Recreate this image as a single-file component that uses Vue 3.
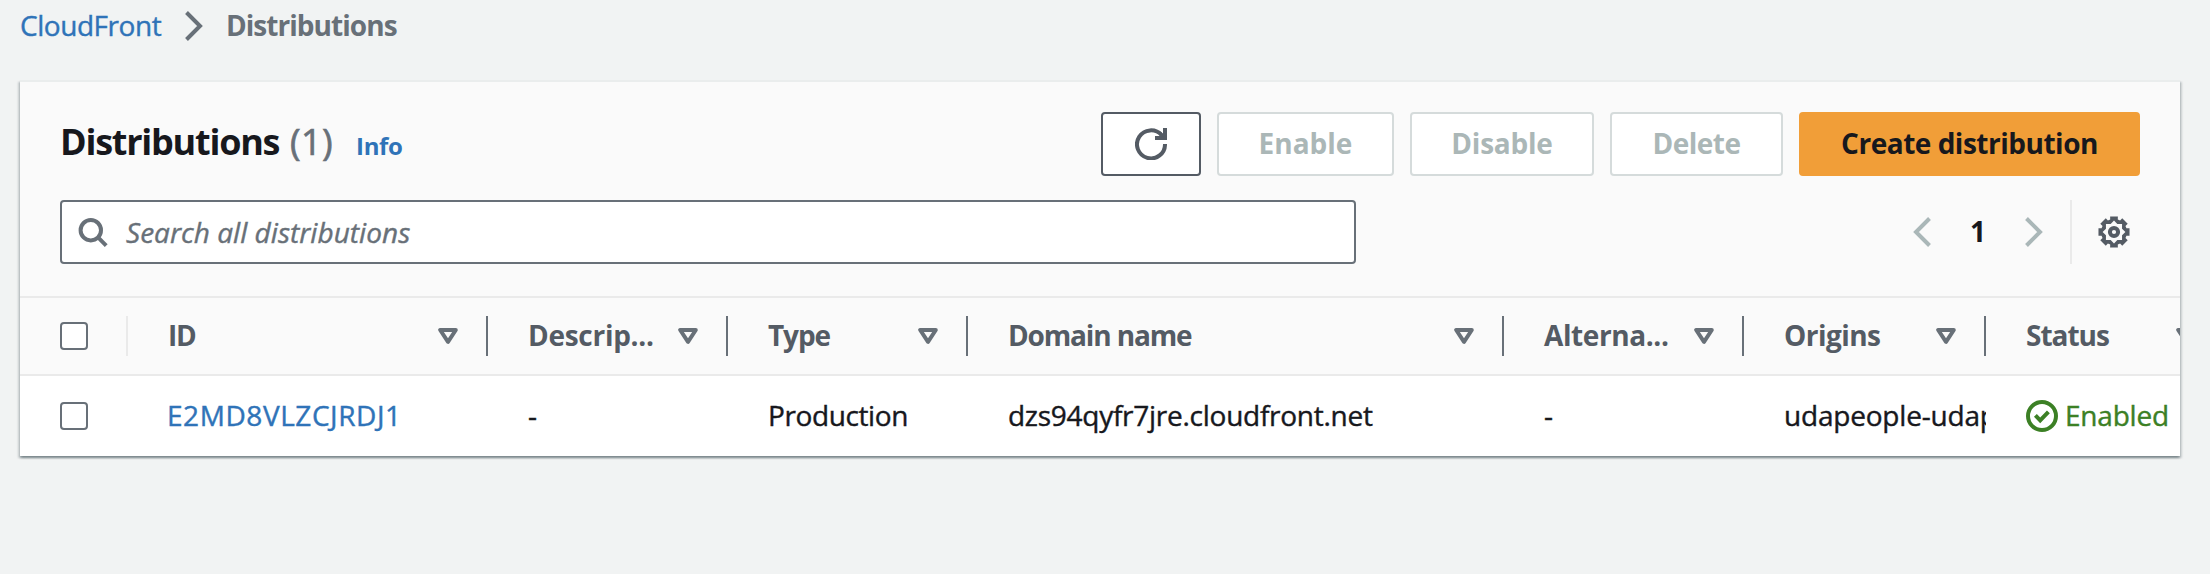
<script setup>
const columns = [
  { key: 'id', label: 'ID', cls: 'w-id' },
  { key: 'description', label: 'Descrip...', cls: 'w-description' },
  { key: 'type', label: 'Type', cls: 'w-type' },
  { key: 'domain', label: 'Domain name', cls: 'w-domain' },
  { key: 'alternate', label: 'Alterna...', cls: 'w-alternate' },
  { key: 'origins', label: 'Origins', cls: 'w-origins' },
  { key: 'status', label: 'Status', cls: 'w-status' }
]

const rows = [
  {
    id: 'E2MD8VLZCJRDJ1',
    description: '-',
    type: 'Production',
    domain: 'dzs94qyfr7jre.cloudfront.net',
    alternate: '-',
    origins: 'udapeople-udap',
    status: 'Enabled'
  }
]

const polar = (deg, r) => {
  const a = (deg * Math.PI) / 180
  return `${(16 + r * Math.sin(a)).toFixed(2)} ${(16 - r * Math.cos(a)).toFixed(2)}`
}

// Eight-toothed rim with a star-shaped opening
const outer = []
const inner = []
for (let k = 0; k < 8; k++) {
  const a = k * 45
  outer.push(polar(a - 17, 13), polar(a - 14, 16), polar(a + 14, 16), polar(a + 17, 13))
  inner.push(polar(a, 11.4), polar(a + 22.5, 8.7))
}
const gearPath = `M${outer.join('L')}ZM${inner.join('L')}Z`
</script>

<template>
  <div class="page">
    <nav class="crumbs">
      <a class="crumb-link">CloudFront</a>
      <svg class="crumb-sep" width="20" height="32" viewBox="0 0 20 32"><path d="M2.5 2.5 16 16 2.5 29.5" /></svg>
      <span class="crumb-current">Distributions</span>
    </nav>

    <section class="card">
      <header class="head">
        <div class="title-row">
          <h1 class="title">Distributions</h1>
          <span class="count">(1)</span>
          <a class="info">Info</a>
          <div class="actions">
            <button class="btn refresh">
              <svg width="32" height="32" viewBox="0 0 32 32">
                <path class="line" d="M30 16A14 14 0 1 1 26.6 7.2" />
                <path class="fill" d="M28 0h4v12H20V8h5.5L24 6l2.5-2L28 6z" />
              </svg>
            </button>
            <button class="btn off enable">Enable</button>
            <button class="btn off disable">Disable</button>
            <button class="btn off delete">Delete</button>
            <button class="btn primary">Create distribution</button>
          </div>
        </div>

        <div class="filter-row">
          <div class="search">
            <svg width="32" height="32" viewBox="0 0 32 32">
              <circle cx="13.8" cy="14.2" r="10.2" /><path d="M20.8 21.2 29.2 29.6" />
            </svg>
            <span class="placeholder">Search all distributions</span>
          </div>
          <div class="pager">
            <svg class="chev" width="20" height="32" viewBox="0 0 20 32"><path d="M17.5 2.5 4 16 17.5 29.5" /></svg>
            <span class="page-no">1</span>
            <svg class="chev" width="20" height="32" viewBox="0 0 20 32"><path d="M2.5 2.5 16 16 2.5 29.5" /></svg>
          </div>
          <div class="settings">
            <svg width="32" height="32" viewBox="0 0 32 32">
              <path class="rim" :d="gearPath" /><circle class="hub" cx="16" cy="16" r="4.1" />
            </svg>
          </div>
        </div>
      </header>

      <div class="grid thead">
        <div class="select"><span class="box"></span></div>
        <div v-for="col in columns" :key="col.key" class="th">
          <span class="label" :class="col.cls">{{ col.label }}</span>
          <svg class="sort" width="20" height="16" viewBox="0 0 20 16"><path d="M2.2 2h15.6L10 13.8z" /></svg>
        </div>
      </div>

      <div v-for="row in rows" :key="row.id" class="grid tbody">
        <div class="select"><span class="box"></span></div>
        <div class="td link">{{ row.id }}</div>
        <div class="td">{{ row.description }}</div>
        <div class="td type">{{ row.type }}</div>
        <div class="td domain">{{ row.domain }}</div>
        <div class="td">{{ row.alternate }}</div>
        <div class="td origins">{{ row.origins }}</div>
        <div class="td status">
          <svg width="32" height="32" viewBox="0 0 32 32">
            <circle cx="16" cy="16" r="14" /><path d="M9.4 15.4 14.2 20.4 22.4 11.8" />
          </svg>
          <span>{{ row.status }}</span>
        </div>
      </div>
    </section>
  </div>
</template>

<style>
body {
  background: #f1f3f3;
}
</style>

<style scoped>
.page {
  box-sizing: border-box;
  height: 574px;
  padding: 0 30px 0 20px;
  overflow: hidden;
  background: #f1f3f3;
  color: #17181d;
  font: 28px/40px "Open Sans", "Noto Sans", sans-serif;
  white-space: nowrap;
}
svg {
  display: block;
  flex: none;
  fill: none;
  stroke-width: 4;
}
.crumb-link,
.placeholder,
.count,
.td {
  -webkit-text-stroke: 0.4px currentColor;
}
.crumbs {
  display: flex;
  align-items: flex-start;
  height: 75px;
  padding-top: 5px;
}
.crumb-link {
  width: 164px;
  letter-spacing: -0.45px;
  color: #2f73b8;
}
.crumb-sep {
  margin-top: 5px;
  stroke: #687078;
}
.crumb-current {
  margin-left: 22px;
  font-weight: 700;
  letter-spacing: -0.96px;
  color: #687078;
}
.card {
  position: relative;
  width: 2160px;
  border-top: 2px solid #eaeded;
  background: #fff;
  box-shadow: 0 2px 2px rgba(0, 28, 36, 0.3), 2px 2px 2px rgba(0, 28, 36, 0.15), -2px 2px 2px rgba(0, 28, 36, 0.15);
}
.head {
  box-sizing: border-box;
  height: 216px;
  padding: 30px 40px 0;
  border-bottom: 2px solid #eaeaea;
  background: #fafafa;
}
.title-row {
  display: flex;
  align-items: baseline;
  height: 64px;
}
.title {
  width: 230px;
  margin: 0;
  font-size: 36px;
  line-height: 60px;
  letter-spacing: -1.24px;
}
.count {
  width: 66px;
  font-size: 36px;
  letter-spacing: 0.4px;
  color: #687078;
  -webkit-text-stroke-width: 0.7px;
}
.info {
  font-size: 24px;
  font-weight: 700;
  letter-spacing: -0.3px;
  color: #2f73b8;
}
.actions {
  display: flex;
  align-self: flex-start;
  gap: 16px;
  margin-left: auto;
}
.btn {
  display: flex;
  align-items: center;
  justify-content: center;
  box-sizing: border-box;
  height: 64px;
  padding: 0 0 2px;
  border: 2px solid #545b64;
  border-radius: 4px;
  background: #fff;
  color: #17181d;
  font: 700 28px/40px "Open Sans", "Noto Sans", sans-serif;
}
.refresh {
  width: 100px;
  padding: 0;
}
.line {
  stroke: #545b64;
}
.fill {
  fill: #545b64;
}
.off {
  border-color: #d5dbdb;
  color: #abb7b7;
}
.enable {
  width: 177px;
}
.disable {
  width: 184px;
  letter-spacing: -0.23px;
}
.delete {
  width: 173px;
  letter-spacing: -0.5px;
}
.primary {
  width: 341px;
  border-color: #f19e38;
  background: #f19e38;
  letter-spacing: -0.49px;
}
.filter-row {
  display: flex;
  align-items: center;
  height: 64px;
  margin-top: 24px;
}
.search {
  display: flex;
  align-items: center;
  box-sizing: border-box;
  width: 1296px;
  height: 64px;
  padding-left: 15px;
  border: 2px solid #687078;
  border-radius: 4px;
  background: #fff;
}
.search svg {
  stroke: #687078;
}
.placeholder {
  margin-left: 17px;
  font-style: italic;
  letter-spacing: 0.03px;
  color: #687078;
}
.pager {
  display: flex;
  align-items: center;
  margin-left: auto;
}
.chev {
  stroke: #aab7b8;
}
.page-no {
  width: 92px;
  padding-bottom: 2px;
  text-align: center;
  font-weight: 700;
}
.settings {
  display: flex;
  align-items: center;
  box-sizing: border-box;
  width: 70px;
  height: 64px;
  margin-left: 26px;
  padding-left: 26px;
  border-left: 2px solid #eaeaea;
}
.rim {
  fill: #545b64;
  fill-rule: evenodd;
}
.hub {
  stroke: #545b64;
}
.grid {
  display: grid;
  grid-template-columns: 108px 360px 240px 240px 536px 240px 242px 240px;
  overflow: hidden;
}
.thead {
  height: 76px;
  border-bottom: 2px solid #eaeaea;
  background: #fafafa;
}
.tbody {
  height: 80px;
}
.select {
  display: flex;
  align-items: center;
  padding-left: 40px;
}
.thead .select {
  height: 40px;
  margin-top: 18px;
  border-right: 2px solid #eaeaea;
}
.box {
  box-sizing: border-box;
  width: 28px;
  height: 28px;
  border: 2px solid #687078;
  border-radius: 4px;
  background: #fff;
}
.th {
  display: flex;
  align-items: center;
  justify-content: space-between;
  box-sizing: border-box;
  height: 40px;
  margin-top: 18px;
  padding: 0 28px 0 40px;
  border-right: 2px solid #687078;
  color: #545b64;
  font-weight: 700;
}
.label {
  padding-bottom: 2px;
}
.sort {
  stroke: #687078;
  stroke-linejoin: round;
}
.w-id {
  letter-spacing: -1.27px;
}
.w-description {
  letter-spacing: -0.28px;
}
.w-type {
  letter-spacing: -1.12px;
}
.w-domain {
  letter-spacing: -1.15px;
}
.w-alternate {
  letter-spacing: -0.4px;
}
.w-origins {
  letter-spacing: -0.55px;
}
.w-status {
  letter-spacing: -1.01px;
}
.td {
  min-width: 0;
  padding: 19px 0 0 40px;
  overflow: hidden;
}
.link {
  padding-left: 39px;
  letter-spacing: 0.56px;
  color: #2f73b8;
}
.type {
  letter-spacing: -0.4px;
}
.domain {
  letter-spacing: -0.26px;
}
.origins {
  letter-spacing: -0.2px;
}
.status {
  display: flex;
  align-items: flex-start;
  letter-spacing: -0.2px;
  color: #3c8025;
}
.status svg {
  margin: 5px 7px 0 0;
  stroke: #3c8025;
}
</style>
